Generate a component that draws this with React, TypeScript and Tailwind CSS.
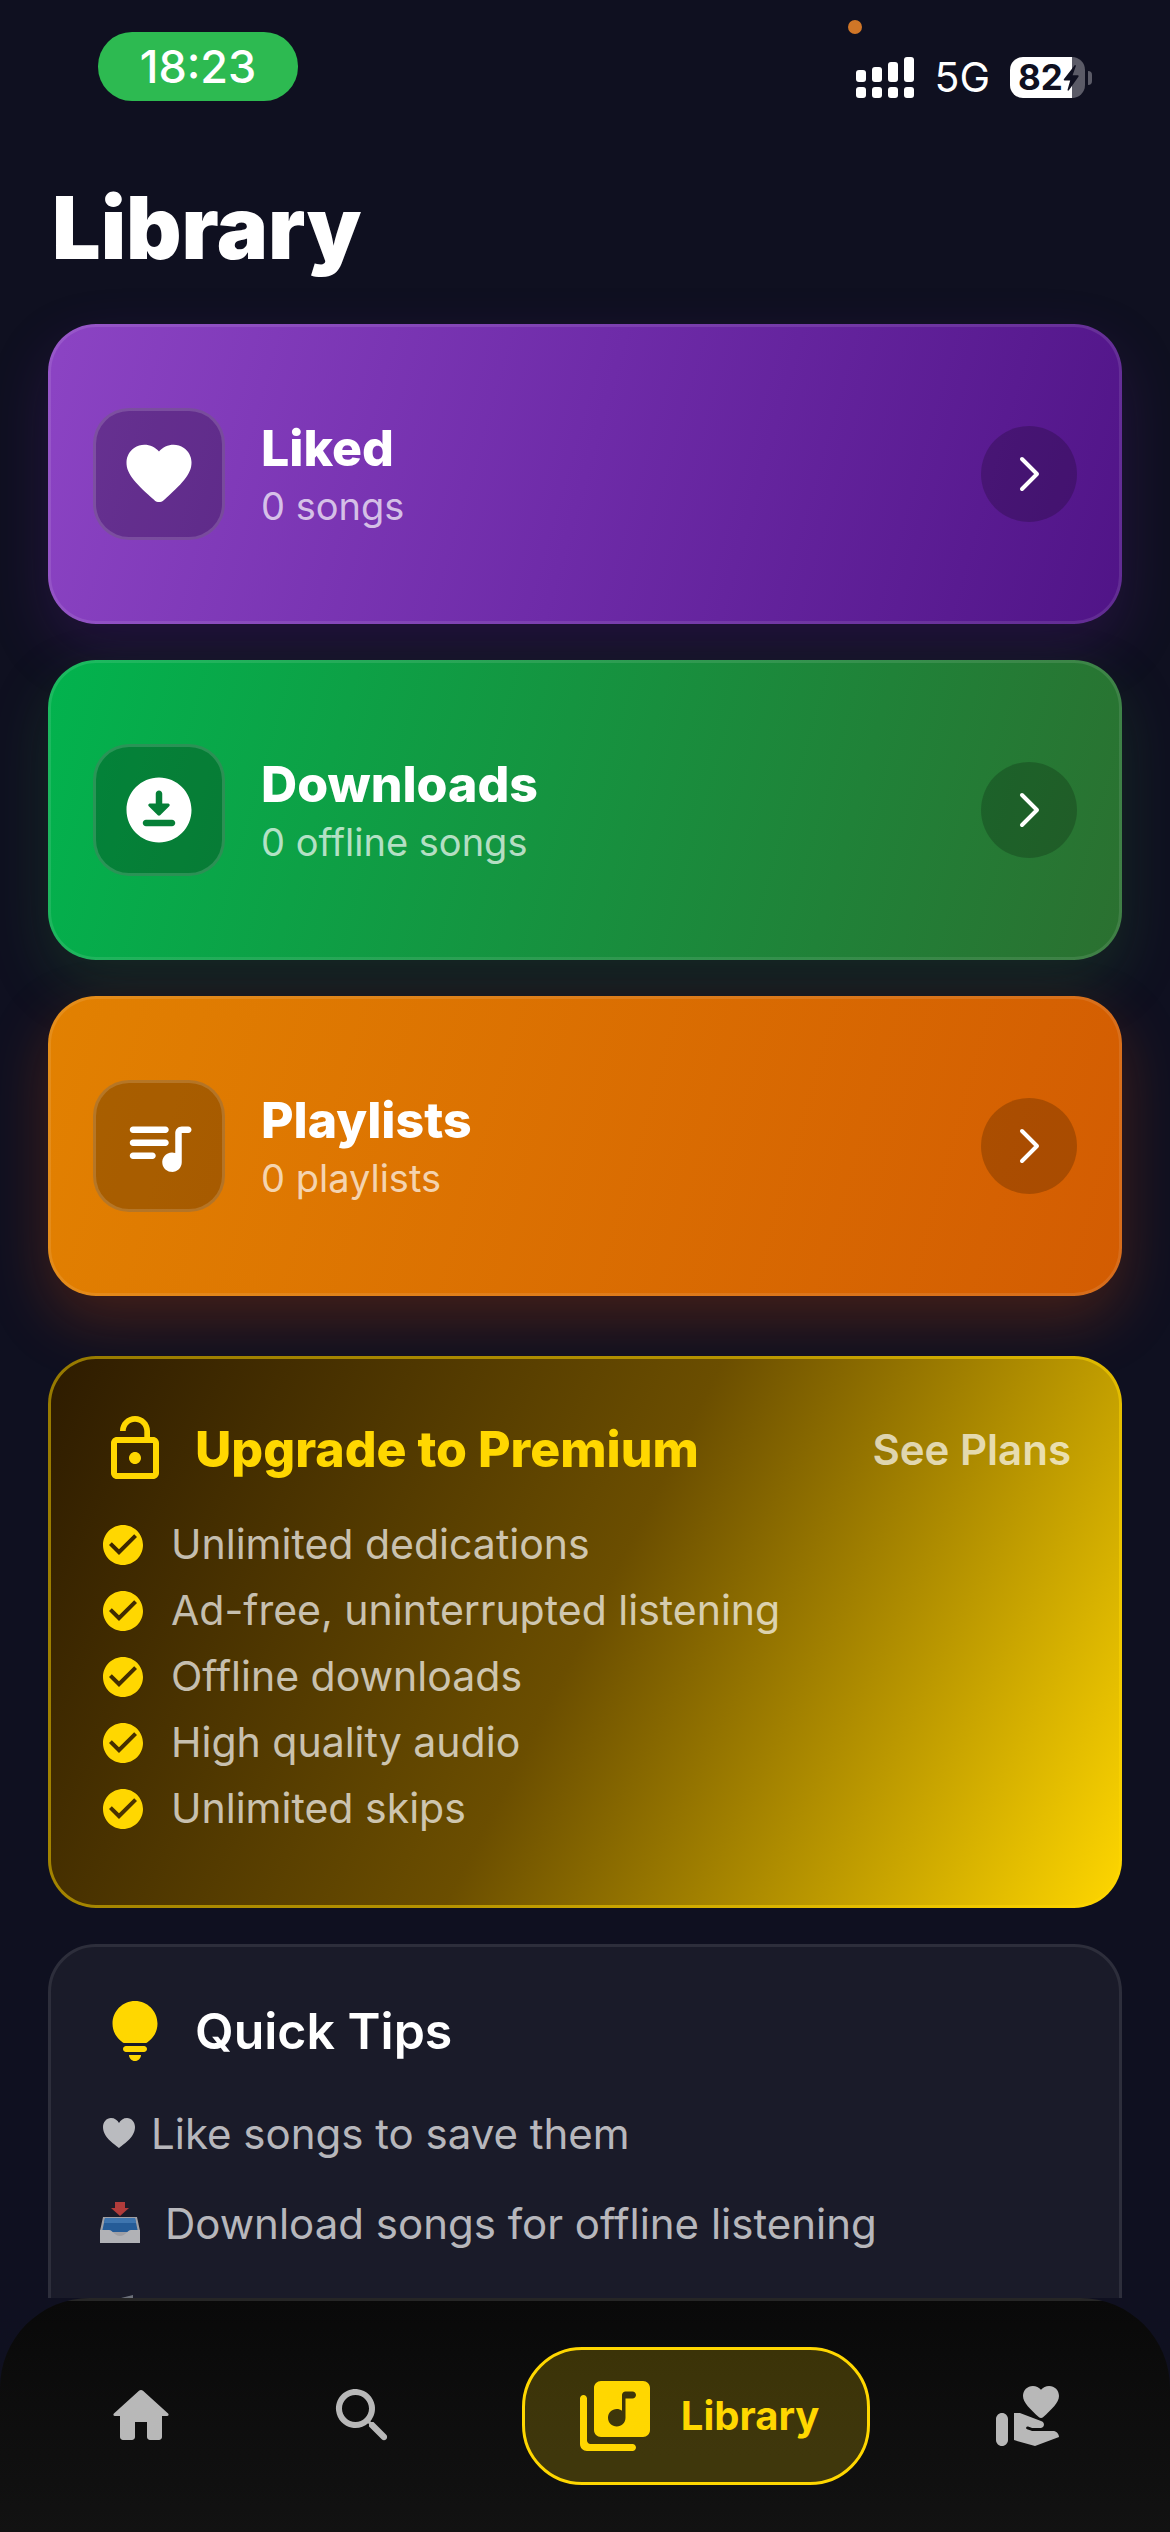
import React from "react";

type IconProps = { path: string; className: string };

function Icon({ path, className }: IconProps) {
  return (
    <svg viewBox="0 0 24 24" fill="currentColor" aria-hidden="true" className={className}>
      <path d={path} />
    </svg>
  );
}

const ICONS = {
  heart:
    "M13.35 20.13c-.76.69-1.93.69-2.69-.01l-.11-.1C5.3 15.27 1.87 12.16 2 8.28c.06-1.7.93-3.33 2.34-4.29 2.64-1.8 5.9-.96 7.66 1.1 1.76-2.06 5.02-2.91 7.66-1.1 1.41.96 2.28 2.59 2.34 4.29.14 3.88-3.3 6.99-8.55 11.76l-.1.09z",
  download:
    "M12 2C6.49 2 2 6.49 2 12s4.49 10 10 10 10-4.49 10-10S17.51 2 12 2zm-1 8V7c0-.55.45-1 1-1s1 .45 1 1v3h1.79c.45 0 .67.54.35.85l-2.79 2.79c-.2.2-.51.2-.71 0l-2.79-2.79c-.31-.31-.09-.85.36-.85H11zm5 7H8c-.55 0-1-.45-1-1s.45-1 1-1h8c.55 0 1 .45 1 1s-.45 1-1 1z",
  queue:
    "M14 6H4c-.55 0-1 .45-1 1s.45 1 1 1h10c.55 0 1-.45 1-1s-.45-1-1-1zm0 4H4c-.55 0-1 .45-1 1s.45 1 1 1h10c.55 0 1-.45 1-1s-.45-1-1-1zM4 16h6c.55 0 1-.45 1-1s-.45-1-1-1H4c-.55 0-1 .45-1 1s.45 1 1 1zM19 6c-1.1 0-2 .9-2 2v6.18c-.31-.11-.65-.18-1-.18-1.84 0-3.28 1.64-2.95 3.54.21 1.21 1.2 2.2 2.41 2.41 1.9.33 3.54-1.11 3.54-2.95V8h2c.55 0 1-.45 1-1s-.45-1-1-1h-2z",
  lockOpen:
    "M12 17c1.1 0 2-.9 2-2s-.9-2-2-2-2 .9-2 2 .9 2 2 2zm6-9h-1V6c0-2.76-2.24-5-5-5S7 3.24 7 6h1.9c0-1.71 1.39-3.1 3.1-3.1 1.71 0 3.1 1.39 3.1 3.1v2H6c-1.1 0-2 .9-2 2v10c0 1.1.9 2 2 2h12c1.1 0 2-.9 2-2V10c0-1.1-.9-2-2-2zm0 12H6V10h12v10z",
  check:
    "M12 2C6.48 2 2 6.48 2 12s4.48 10 10 10 10-4.48 10-10S17.52 2 12 2zm-2 15l-5-5 1.41-1.41L10 14.17l7.59-7.59L19 8l-9 9z",
  bulb:
    "M12 22c1.1 0 2-.9 2-2h-4c0 1.1.9 2 2 2zm-3-3h6c.55 0 1-.45 1-1s-.45-1-1-1H9c-.55 0-1 .45-1 1s.45 1 1 1zm3-17C7.86 2 4.5 5.36 4.5 9.5c0 3.82 2.66 5.86 3.77 6.5h7.46c1.11-.64 3.77-2.68 3.77-6.5C19.5 5.36 16.14 2 12 2z",
  home:
    "M10 19v-5h4v5c0 .55.45 1 1 1h3c.55 0 1-.45 1-1v-7h1.7c.46 0 .68-.57.33-.87L12.67 3.6c-.38-.34-.96-.34-1.34 0l-8.36 7.53c-.34.3-.13.87.33.87H5v7c0 .55.45 1 1 1h3c.55 0 1-.45 1-1z",
  search:
    "M15.5 14h-.79l-.28-.27c1.2-1.4 1.82-3.31 1.48-5.34-.47-2.78-2.79-5-5.59-5.34-4.23-.52-7.79 3.04-7.27 7.27.34 2.8 2.56 5.12 5.34 5.59 2.03.34 3.94-.28 5.34-1.48l.27.28v.79l4.25 4.25c.41.41 1.08.41 1.49 0 .41-.41.41-1.08 0-1.49L15.5 14zm-6 0C7.01 14 5 11.99 5 9.5S7.01 5 9.5 5 14 7.01 14 9.5 11.99 14 9.5 14z",
  library:
    "M20 2H8c-1.1 0-2 .9-2 2v12c0 1.1.9 2 2 2h12c1.1 0 2-.9 2-2V4c0-1.1-.9-2-2-2zm-3 5h-2v5.5c0 1.38-1.12 2.5-2.5 2.5S10 13.88 10 12.5s1.12-2.5 2.5-2.5c.57 0 1.08.19 1.5.51V6c0-.55.45-1 1-1h2c.55 0 1 .45 1 1s-.45 1-1 1zM3 6c-.55 0-1 .45-1 1v13c0 1.1.9 2 2 2h13c.55 0 1-.45 1-1s-.45-1-1-1H5c-.55 0-1-.45-1-1V7c0-.55-.45-1-1-1z",
  giving:
    "M3 11c-1.1 0-2 .9-2 2v7c0 1.1.9 2 2 2s2-.9 2-2v-7c0-1.1-.9-2-2-2zM10 5.3C10 3.45 11.45 2 13.3 2c1.04 0 2.05.49 2.7 1.25C16.65 2.49 17.66 2 18.7 2 20.55 2 22 3.45 22 5.3c0 2.1-2.5 4.55-5.32 7.09-.38.35-.97.35-1.35 0C12.5 9.85 10 7.4 10 5.3zM19.99 17h-6.83c-.11 0-.22-.02-.33-.06l-1.47-.51c-.26-.09-.39-.37-.3-.63.09-.26.38-.4.64-.3l1.12.43c.11.04.24.07.36.07h2.63c.65 0 1.18-.53 1.18-1.18 0-.49-.31-.93-.77-1.11L8.97 11H7v9.02L14 22l8-3c-.01-1.1-.9-2-2.01-2z",
};

const COLLECTIONS = [
  {
    title: "Liked",
    detail: "0 songs",
    icon: ICONS.heart,
    tone: "bg-[linear-gradient(106deg,#8c44c4,#6e2ba8_50%,#501487)] shadow-[0_24px_60px_rgba(110,30,170,0.22)]",
  },
  {
    title: "Downloads",
    detail: "0 offline songs",
    icon: ICONS.download,
    tone: "bg-[linear-gradient(106deg,#02b34e,#2b7030)] shadow-[0_24px_60px_rgba(46,125,50,0.24)]",
  },
  {
    title: "Playlists",
    detail: "0 playlists",
    icon: ICONS.queue,
    tone: "bg-[linear-gradient(106deg,#e28101,#d35c02)] shadow-[0_24px_60px_rgba(230,81,0,0.25)]",
  },
];

const BENEFITS = [
  "Unlimited dedications",
  "Ad-free, uninterrupted listening",
  "Offline downloads",
  "High quality audio",
  "Unlimited skips",
];

function StatusBar() {
  return (
    <div className="flex h-[174px] shrink-0 items-start justify-between pt-8 pr-[78px] pl-[98px]">
      <div className="flex h-[69px] w-[200px] items-center justify-center rounded-[34px] bg-[#2dba51] text-[45px] font-medium">
        18:23
      </div>
      <div className="relative flex h-[91px] items-center gap-5">
        <span className="absolute -top-3 -left-2 size-[14px] rounded-full bg-[#d07627]" />
        <svg viewBox="0 0 58 41" fill="currentColor" className="h-[41px] w-[58px]" aria-label="Signal">
          <rect x="0" y="13" width="10" height="12" rx="3" />
          <rect x="16" y="10" width="10" height="15" rx="3" />
          <rect x="32" y="5" width="10" height="20" rx="3" />
          <rect x="48" y="0" width="10" height="25" rx="3" />
          <rect x="0" y="30" width="10" height="11" rx="3" />
          <rect x="16" y="30" width="10" height="11" rx="3" />
          <rect x="32" y="30" width="10" height="11" rx="3" />
          <rect x="48" y="30" width="10" height="11" rx="3" />
        </svg>
        <span className="text-[41px]">5G</span>
        <div className="flex items-center gap-[3px]">
          <div className="flex h-[41px] w-[75px] items-center rounded-[13px] bg-[linear-gradient(90deg,#fff_62px,#5b5b67_62px)] pl-2 text-[#0f1020]">
            <span className="text-[35px] font-bold">82</span>
            <svg viewBox="0 0 16 26" fill="currentColor" className="h-[26px] w-4" aria-hidden="true">
              <path d="M11.5.4 1 14c-.6.8-.2 1.4.6 1.4h5.6L4.6 24.6c-.3 1 .6 1.4 1.3.6L15.4 11.8c.6-.8.2-1.5-.6-1.5H9.6L12.8 1.2c.3-.9-.6-1.5-1.3-.8z" />
            </svg>
          </div>
          <span className="h-[14px] w-1 rounded-r-full bg-[#5b5b67]" />
        </div>
      </div>
    </div>
  );
}

function CollectionCard({ title, detail, icon, tone }: (typeof COLLECTIONS)[number]) {
  return (
    <button
      type="button"
      className={`flex h-[300px] w-full items-center rounded-[48px] border-[3px] border-white/10 bg-origin-border px-[42px] text-left ${tone}`}
    >
      <span className="flex size-[132px] shrink-0 items-center justify-center rounded-[36px] border-[3px] border-white/15 bg-black/25">
        <Icon path={icon} className="size-[78px]" />
      </span>
      <span className="ml-9 flex flex-1 flex-col gap-[6px]">
        <span className="text-[50px] leading-[58px] font-extrabold">{title}</span>
        <span className="text-[38px] leading-[46px] text-white/70">{detail}</span>
      </span>
      <span className="flex size-24 shrink-0 items-center justify-center rounded-full bg-black/20">
        <svg
          viewBox="0 0 24 36"
          fill="none"
          stroke="currentColor"
          strokeWidth="4"
          strokeLinecap="round"
          strokeLinejoin="round"
          className="h-9 w-6"
          aria-hidden="true"
        >
          <path d="M5 3l15 15L5 33" />
        </svg>
      </span>
    </button>
  );
}

function PremiumCard() {
  return (
    <section className="mt-[60px] rounded-[48px] border-[3px] border-[#ffd700]/50 bg-[linear-gradient(117deg,#2d1b00,#6b4e00_50%,#ffd700)] bg-origin-border px-12 pt-[54px] pb-[63px]">
      <div className="flex items-center gap-6">
        <Icon path={ICONS.lockOpen} className="size-[72px] shrink-0 text-[#ffd700]" />
        <h2 className="flex-1 text-[50px] leading-[58px] font-extrabold text-[#ffd700]">Upgrade to Premium</h2>
        <a href="#plans" className="text-[42px] font-semibold text-white/70">
          See Plans
        </a>
      </div>
      <ul className="mt-[27px]">
        {BENEFITS.map((benefit) => (
          <li key={benefit} className="flex h-[66px] items-center gap-6">
            <Icon path={ICONS.check} className="size-12 shrink-0 text-[#ffd700]" />
            <span className="text-[41px] text-white/70">{benefit}</span>
          </li>
        ))}
      </ul>
    </section>
  );
}

function InboxTray() {
  return (
    <svg viewBox="0 0 42 42" className="size-[42px] shrink-0 opacity-70" aria-hidden="true">
      <path d="M4 15h34l3 14v12H1V29z" fill="#d8d8d8" />
      <path d="M6 16h30l3 14H3z" fill="#2a78c8" />
      <path d="M6 16h30l1 5H5z" fill="#4e9be8" />
      <path d="M1 28h9c4 0 5 6 11 6s7-6 11-6h9v13H1z" fill="#f2f2f2" />
      <path d="M16 0h10v6h4l-9 8-9-8h4z" fill="#f04a43" />
    </svg>
  );
}

function NoteGlyph() {
  return (
    <svg viewBox="0 0 42 42" className="size-[42px] shrink-0 opacity-70" aria-hidden="true">
      <path d="M14 8 34 3v26a6 5 0 1 1-4-5V11l-12 3v19a6 5 0 1 1-4-5z" fill="#8f949c" />
    </svg>
  );
}

function TipsCard() {
  return (
    <section className="mt-9 rounded-[48px] border-[3px] border-[#2d2e3b] bg-[#1a1b29] px-12 py-12">
      <div className="flex items-center gap-6">
        <Icon path={ICONS.bulb} className="size-[72px] shrink-0 text-[#ffd700]" />
        <h2 className="text-[50px] leading-[58px] font-semibold">Quick Tips</h2>
      </div>
      <ul className="mt-[33px] flex flex-col gap-6 text-[42px] text-white/70">
        <li className="flex h-[66px] items-center gap-[14px]">
          <svg viewBox="0 0 36 36" fill="currentColor" className="ml-[2px] size-9 shrink-0" aria-hidden="true">
            <path d="M18 33C15 30 2 23 2 12 2 7 5.5 3 10 3c3.5 0 6.5 2 8 5 1.5-3 4.5-5 8-5 4.5 0 8 4 8 9 0 11-13 18-16 21z" />
          </svg>
          <span>Like songs to save them</span>
        </li>
        <li className="flex h-[66px] items-center gap-6">
          <InboxTray />
          <span>Download songs for offline listening</span>
        </li>
        <li className="flex h-[66px] items-center">
          <NoteGlyph />
        </li>
      </ul>
    </section>
  );
}

function NavBar() {
  return (
    <nav
      aria-label="Main"
      className="flex shrink-0 items-center justify-around rounded-t-[90px] bg-[linear-gradient(180deg,#262626_3px,#090909_3px,#121212)] px-[30px] pt-[49px] pb-[47px] text-[#b8b8b8]"
    >
      <button type="button" aria-label="Home" className="px-7">
        <Icon path={ICONS.home} className="size-[72px]" />
      </button>
      <button type="button" aria-label="Search" className="px-7">
        <Icon path={ICONS.search} className="size-[72px]" />
      </button>
      <button
        type="button"
        aria-current="page"
        className="flex h-[138px] items-center gap-6 rounded-[60px] border-[3px] border-[#ffd700] bg-[#ffd700]/20 px-12 text-[40px] font-bold text-[#ffd700]"
      >
        <Icon path={ICONS.library} className="size-[84px]" />
        Library
      </button>
      <button type="button" aria-label="Support" className="px-7">
        <Icon path={ICONS.giving} className="size-[72px]" />
      </button>
    </nav>
  );
}

export default function App() {
  return (
    <div className="flex h-screen flex-col bg-[#0f1020] font-['Inter',sans-serif] text-white">
      <StatusBar />
      <main className="flex min-h-0 flex-1 flex-col overflow-hidden px-12">
        <h1 className="shrink-0 pl-1 text-[86px] leading-[108px] font-black">Library</h1>
        <div className="mt-[42px] flex shrink-0 flex-col gap-9">
          {COLLECTIONS.map((item) => (
            <CollectionCard key={item.title} {...item} />
          ))}
        </div>
        <div className="shrink-0">
          <PremiumCard />
          <TipsCard />
        </div>
      </main>
      <NavBar />
    </div>
  );
}
